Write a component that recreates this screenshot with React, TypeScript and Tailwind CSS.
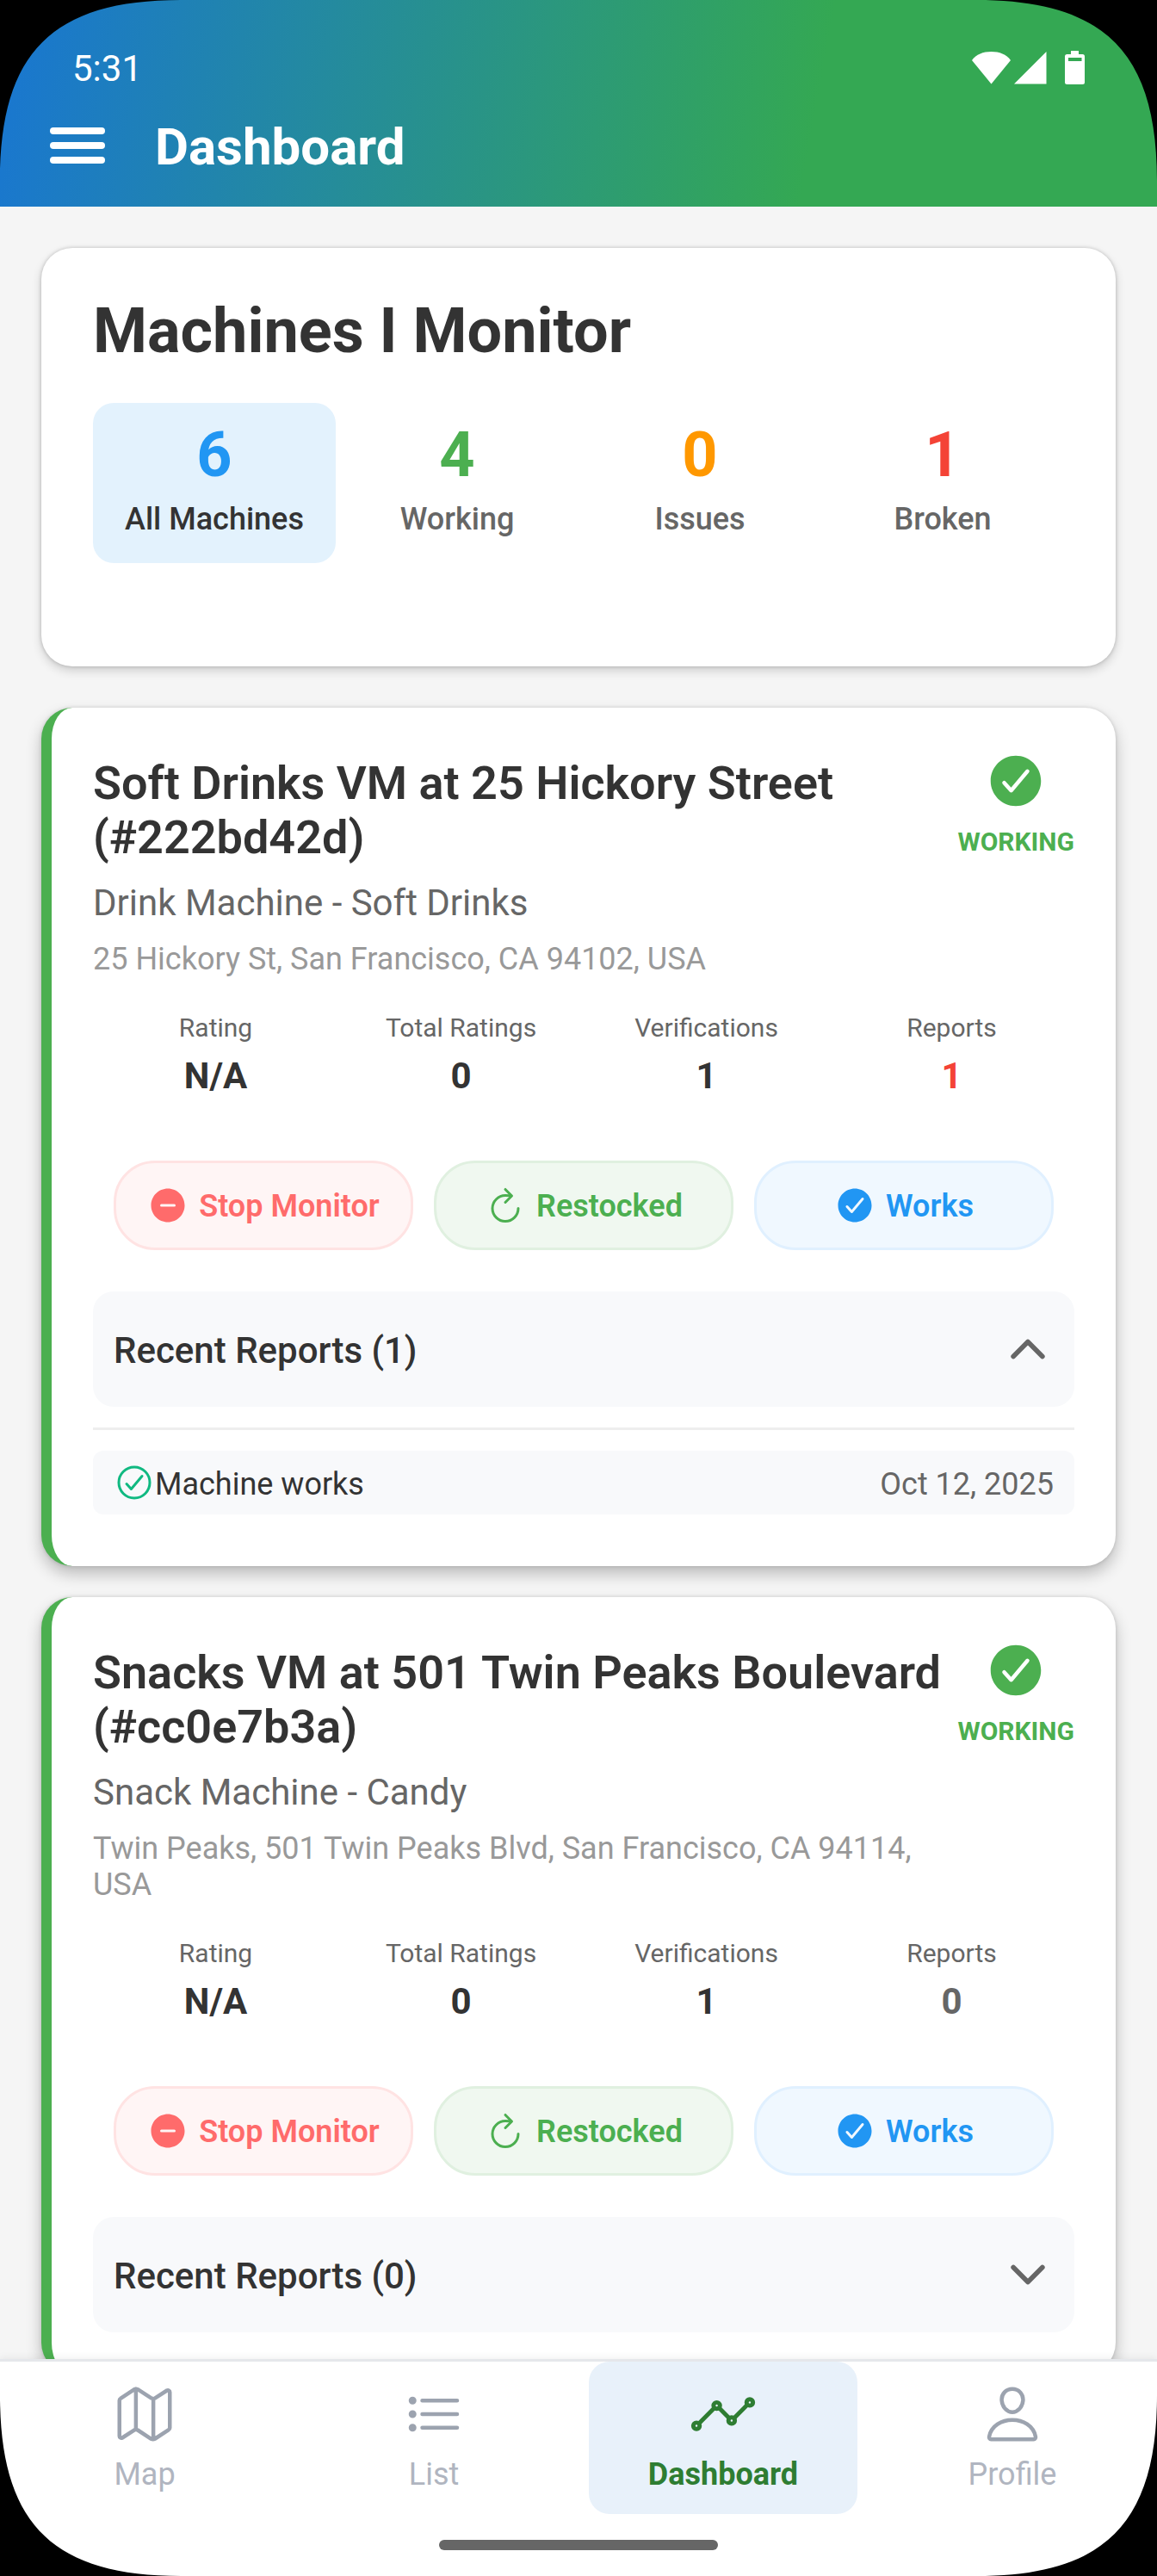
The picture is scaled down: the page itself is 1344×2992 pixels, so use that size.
import { useState } from "react";
import {
  IoAnalyticsOutline,
  IoCheckmarkCircle,
  IoCheckmarkCircleOutline,
  IoChevronDown,
  IoChevronUp,
  IoListOutline,
  IoMapOutline,
  IoPersonOutline,
  IoRemoveCircle,
} from "react-icons/io5";

const filters = [
  { label: "All Machines", count: 6, color: "text-[#2196f3]" },
  { label: "Working", count: 4, color: "text-[#4caf50]" },
  { label: "Issues", count: 0, color: "text-[#ff9800]" },
  { label: "Broken", count: 1, color: "text-[#f44336]" },
];

const machines = [
  {
    name: "Soft Drinks VM at 25 Hickory Street (#222bd42d)",
    type: "Drink Machine - Soft Drinks",
    address: "25 Hickory St, San Francisco, CA 94102, USA",
    verifications: 1,
    reports: [{ text: "Machine works", date: "Oct 12, 2025" }],
  },
  {
    name: "Snacks VM at 501 Twin Peaks Boulevard (#cc0e7b3a)",
    type: "Snack Machine - Candy",
    address: "Twin Peaks, 501 Twin Peaks Blvd, San Francisco, CA 94114, USA",
    verifications: 1,
    reports: [],
  },
];

const tabs = [
  { label: "Map", icon: IoMapOutline },
  { label: "List", icon: IoListOutline },
  { label: "Dashboard", icon: IoAnalyticsOutline },
  { label: "Profile", icon: IoPersonOutline },
];

function RefreshIcon() {
  return (
    <svg viewBox="0 0 512 512" className="size-12" fill="none" stroke="currentColor" strokeWidth="32" strokeLinecap="round">
      <path d="M320 146s24.36-12-64-12a160 160 0 10160 160" strokeMiterlimit="10" />
      <path d="M256 58l80 80-80 80" strokeLinejoin="round" />
    </svg>
  );
}

function Header() {
  return (
    <header className="flex h-[240px] shrink-0 flex-col bg-[linear-gradient(100.12deg,#1976d2_0%,#34a853_70%)] text-white">
      <div className="flex items-start justify-between pt-[55px] pr-[84px] pl-[84px]">
        <span className="text-[42px] leading-[49px]">5:31</span>
        <svg viewBox="0 0 131 39" className="mt-1 h-[39px] w-[131px]" fill="currentColor">
          <path d="M0 11C5 4 13 1 22.500 1S40 4 45 11L22.500 38.500Z" />
          <path d="M86.500 1V38.500H49Z" />
          <path d="M115 0h9v4h4.500q2.500 0 2.500 2.500v30q0 2.500-2.500 2.500h-18q-2.500 0-2.500-2.500v-30q0-2.500 2.500-2.500h4.500zM112 8v4h15.500V8z" fillRule="evenodd" />
        </svg>
      </div>
      <div className="mt-[31px] flex items-center pl-[58px]">
        <svg viewBox="0 0 64 42" className="-mt-1 h-[42px] w-16" fill="currentColor">
          <rect width="64" height="8" rx="4" />
          <rect y="17" width="64" height="8" rx="4" />
          <rect y="34" width="64" height="8" rx="4" />
        </svg>
        <h1 className="ml-[58px] pt-px text-[60px] leading-[70px] font-bold">Dashboard</h1>
      </div>
    </header>
  );
}

function Summary() {
  const [selected, setSelected] = useState("All Machines");
  return (
    <section className="h-[486px] shrink-0 rounded-[36px] bg-white px-[60px] pt-[55px] shadow-[0_0_4px_rgba(0,0,0,0.2),0_5px_12px_rgba(0,0,0,0.16)]">
      <h2 className="text-[72px] leading-[84px] font-bold text-[#333]">Machines I Monitor</h2>
      <div className="mt-[41px] flex">
        {filters.map((f) => (
          <button
            key={f.label}
            onClick={() => setSelected(f.label)}
            className={`flex h-[186px] w-[282px] flex-col items-center gap-[11px] rounded-3xl pt-[19px] ${selected === f.label ? "bg-[#e3f2fd] text-[#333]" : "text-[#666]"}`}
          >
            <span className={`text-[72px] leading-[84px] font-bold ${f.color}`}>{f.count}</span>
            <span className="text-[36px] leading-[42px] font-medium">{f.label}</span>
          </button>
        ))}
      </div>
    </section>
  );
}

function Stat({ label, value, color = "text-[#333]" }: { label: string; value: string | number; color?: string }) {
  return (
    <div className="flex flex-1 flex-col items-center gap-3.5">
      <span className="text-[30px] leading-[35px] text-[#666]">{label}</span>
      <span className={`text-[42px] leading-[49px] font-bold ${color}`}>{value}</span>
    </div>
  );
}

function MachineCard({ machine }: { machine: (typeof machines)[number] }) {
  const [open, setOpen] = useState(machine.reports.length > 0);
  const pill = "flex h-[104px] flex-1 items-center justify-center gap-3 rounded-[48px] border-3 text-[36px] leading-[42px] font-semibold";
  return (
    <section className="shrink-0 rounded-[36px] border-l-12 border-[#4caf50] bg-white p-12 shadow-[0_0_4px_rgba(0,0,0,0.14),0_9px_18px_rgba(0,0,0,0.24)]">
      <div className="flex">
        <div className="flex-1 pt-2">
          <h3 className="text-[54px] leading-[63px] font-semibold text-[#333]">{machine.name}</h3>
          <p className="mt-5 text-[42px] leading-[49px] text-[#666]">{machine.type}</p>
          <p className="mt-5 text-[36px] leading-[42px] text-[#999]">{machine.address}</p>
        </div>
        <div className="flex flex-col items-center gap-[17px] pt-px text-[#4caf50]">
          <IoCheckmarkCircle className="size-[72px]" />
          <span className="text-[30px] leading-[35px] font-bold">WORKING</span>
        </div>
      </div>

      <div className="mt-[41px] flex">
        <Stat label="Rating" value="N/A" />
        <Stat label="Total Ratings" value={0} />
        <Stat label="Verifications" value={machine.verifications} />
        <Stat
          label="Reports"
          value={machine.reports.length}
          color={machine.reports.length > 0 ? "text-[#f44336]" : "text-[#666]"}
        />
      </div>

      <div className="mt-[74px] flex gap-6 px-6">
        <button className={`${pill} border-[#ffe3e3] bg-[#fff5f5] text-[#ff6b6b]`}>
          <IoRemoveCircle className="size-12" />
          <span className="pt-0.5">Stop Monitor</span>
        </button>
        <button className={`${pill} border-[#e0f0e0] bg-[#f0f8f0] text-[#4caf50]`}>
          <RefreshIcon />
          <span className="pt-0.5">Restocked</span>
        </button>
        <button className={`${pill} border-[#e0f0ff] bg-[#f0f8ff] text-[#2196f3]`}>
          <IoCheckmarkCircle className="size-12" />
          <span className="pt-0.5">Works</span>
        </button>
      </div>

      <button
        onClick={() => setOpen(!open)}
        className="mt-12 flex h-[134px] w-full items-center justify-between rounded-3xl bg-[#f8f9fb] px-6"
      >
        <span className="pt-0.5 text-[42px] leading-[49px] font-medium text-[#333]">Recent Reports ({machine.reports.length})</span>
        {open ? <IoChevronUp className="size-[60px] text-[#666]" /> : <IoChevronDown className="size-[60px] text-[#666]" />}
      </button>

      {open && (
        <div className="mt-6 border-t-3 border-[#eee] pt-6">
          {machine.reports.map((r) => (
            <div key={r.text} className="mb-3 flex h-[74px] items-center rounded-xl bg-[#f8f9fb] px-6 text-[36px] leading-[42px]">
              <IoCheckmarkCircleOutline className="size-12 text-[#10b981]" />
              <span className="flex-1 pt-[3px] text-[#333]">{r.text}</span>
              <span className="pt-[3px] text-[#666]">{r.date}</span>
            </div>
          ))}
        </div>
      )}
    </section>
  );
}

function TabBar() {
  return (
    <nav className="z-10 flex h-[252px] shrink-0 flex-col items-center border-t-3 border-[#e5e7eb] bg-white shadow-[0_-2px_8px_rgba(0,0,0,0.06)]">
      <div className="flex w-full">
        {tabs.map(({ label, icon: Icon }) => {
          const active = label === "Dashboard";
          return (
            <button
              key={label}
              className={`mx-3 flex h-[177px] flex-1 flex-col items-center gap-[13px] rounded-3xl pt-[25px] ${active ? "bg-[#e8f1fa] text-[#2e7d32]" : "text-[#9ca3af]"}`}
            >
              <Icon className={`size-[72px] ${active ? "scale-110" : ""}`} />
              <span className={`text-[36px] leading-[42px] ${active ? "font-bold" : "text-[#b0b5c0]"}`}>{label}</span>
            </button>
          );
        })}
      </div>
      <div className="mt-[30px] h-3 w-[324px] rounded-md bg-[#666]" />
    </nav>
  );
}

// black display corners, drawn above everything
function Corner({ className }: { className: string }) {
  return (
    <svg viewBox="0 0 210 210" className={`pointer-events-none absolute z-20 size-[210px] ${className}`}>
      <path d="M0 0H210C61 0 0 61 0 210Z" fill="#000" />
    </svg>
  );
}

export default function App() {
  return (
    <div className="relative flex h-[2992px] w-[1344px] flex-col overflow-hidden bg-[#f5f5f5] font-[Roboto,sans-serif]">
      <Header />
      <main className="flex min-h-0 flex-1 flex-col overflow-hidden px-12 pt-12">
        <Summary />
        <div className="mt-12 flex flex-col gap-9">
          {machines.map((m) => (
            <MachineCard key={m.name} machine={m} />
          ))}
        </div>
      </main>
      <TabBar />
      <Corner className="top-0 left-0" />
      <Corner className="top-0 right-0 rotate-90" />
      <Corner className="right-0 bottom-0 rotate-180" />
      <Corner className="bottom-0 left-0 -rotate-90" />
    </div>
  );
}
